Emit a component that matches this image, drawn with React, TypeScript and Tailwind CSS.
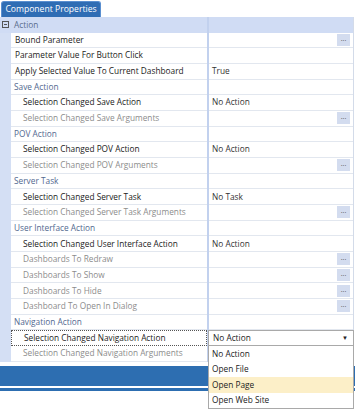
import React from "react";

type Row =
  | { kind: "cat"; label: string }
  | { kind: "prop"; label: string; indent: number; disabled?: boolean; value?: string; dots?: boolean; combo?: boolean };

const rows: Row[] = [
  { kind: "prop", label: "Bound Parameter", indent: 0, dots: true },
  { kind: "prop", label: "Parameter Value For Button Click", indent: 0 },
  { kind: "prop", label: "Apply Selected Value To Current Dashboard", indent: 0, value: "True" },
  { kind: "cat", label: "Save Action" },
  { kind: "prop", label: "Selection Changed Save Action", indent: 1, value: "No Action" },
  { kind: "prop", label: "Selection Changed Save Arguments", indent: 1, disabled: true, dots: true },
  { kind: "cat", label: "POV Action" },
  { kind: "prop", label: "Selection Changed POV Action", indent: 1, value: "No Action" },
  { kind: "prop", label: "Selection Changed POV Arguments", indent: 1, disabled: true, dots: true },
  { kind: "cat", label: "Server Task" },
  { kind: "prop", label: "Selection Changed Server Task", indent: 1, value: "No Task" },
  { kind: "prop", label: "Selection Changed Server Task Arguments", indent: 1, disabled: true, dots: true },
  { kind: "cat", label: "User Interface Action" },
  { kind: "prop", label: "Selection Changed User Interface Action", indent: 1, value: "No Action" },
  { kind: "prop", label: "Dashboards To Redraw", indent: 1, disabled: true, dots: true },
  { kind: "prop", label: "Dashboards To Show", indent: 1, disabled: true, dots: true },
  { kind: "prop", label: "Dashboards To Hide", indent: 1, disabled: true, dots: true },
  { kind: "prop", label: "Dashboard To Open In Dialog", indent: 1, disabled: true, dots: true },
  { kind: "cat", label: "Navigation Action" },
  { kind: "prop", label: "Selection Changed Navigation Action", indent: 1, combo: true },
  { kind: "prop", label: "Selection Changed Navigation Arguments", indent: 1, disabled: true },
];

const options = ["No Action", "Open File", "Open Page", "Open Web Site"];

function DotsButton() {
  return (
    <div className="ml-auto mr-[3px] flex h-[12px] w-[13px] items-center justify-center bg-[#d3dcef] text-[7px] leading-none text-[#555]">
      <span className="-mt-[3px]">...</span>
    </div>
  );
}

export default function App() {
  return (
    <div
      className="relative h-[410px] w-[355px] overflow-hidden bg-white text-[8.3px] text-[#222]"
      style={{ fontFamily: '"Open Sans", "Noto Sans", sans-serif' }}
    >
      <div className="pl-[1px] pt-[1px]">
        <div className="flex h-[16px] w-[100px] items-center justify-center rounded-t-[3px] border border-b-0 border-[#5a8fd0] bg-[#2f6db4] text-[8.6px] text-white">
          Component Properties
        </div>
      </div>

      {/* Grid */}
      <div className="flex w-[354px] flex-col border-r border-[#d3dbe9]">
        {/* Header row */}
        <div className="flex h-[15.68px] items-stretch bg-[#d0dcf4]">
          <div className="flex w-[11px] items-center justify-center">
            <div className="relative h-[7px] w-[7px] border border-[#555]">
              <div className="absolute left-[1px] top-[2px] h-[1px] w-[3px] bg-[#555]" />
            </div>
          </div>
          <div className="flex w-[196px] items-center pl-[3px] text-[#5a6d8e]">Action</div>
          <div className="w-[2px] bg-[#c2d1ee]" />
          <div className="flex-1" />
        </div>

        {rows.map((r, i) => {
          if (r.kind === "cat") {
            return (
              <div key={i} className="flex h-[15.68px] items-stretch">
                <div className="w-[11px] bg-[#d4dff4]" />
                <div className="flex w-[196px] items-center border-b border-[#e2e7ef] pl-[3px] text-[#52688f]">
                  {r.label}
                </div>
                <div className="w-[2px] bg-[#c2d1ee]" />
                <div className="flex-1 border-b border-[#e2e7ef]" />
              </div>
            );
          }
          return (
            <div key={i} className="flex h-[15.68px] items-stretch">
              <div className="w-[11px] bg-[#d4dff4]" />
              <div
                className={
                  "flex w-[196px] items-center overflow-hidden whitespace-nowrap " +
                  (r.combo
                    ? "border border-dotted border-[#555] "
                    : "border-b border-[#e2e7ef] ") +
                  (r.indent ? "pl-[12px] " : "pl-[4px] ") +
                  (r.disabled ? "text-[#8c8c8c]" : "text-[#222]")
                }
              >
                {r.label}
              </div>
              <div className="w-[2px] bg-[#c2d1ee]" />
              <div className="relative flex flex-1 items-center border-b border-[#e2e7ef] pl-[3px] text-[#333]">
                {r.value ? <span>{r.value}</span> : null}
                {r.dots ? <DotsButton /> : null}
                {r.combo ? (
                  <>
                    <div className="absolute -left-[1px] -right-[1px] top-0 z-10 flex h-[16px] items-center border border-[#a9a9a9] bg-white pl-[4px] text-[#222]">
                      <span>No Action</span>
                      <span className="ml-auto mr-[5px] text-[6px]">▼</span>
                    </div>
                    <div className="absolute -left-[1px] -right-[1px] top-[16px] z-10 flex h-[63px] flex-col border border-t-0 border-[#a9a9a9] bg-white text-[#222]">
                      {options.map((o) => (
                        <div
                          key={o}
                          className={
                            "flex h-[15.5px] items-center pl-[3px] " +
                            (o === "Open Page" ? "bg-[#fcefc8]" : "")
                          }
                        >
                          {o}
                        </div>
                      ))}
                    </div>
                  </>
                ) : null}
              </div>
            </div>
          );
        })}
      </div>

      {/* Bottom bars */}
      <div className="mt-[4px] h-[20px] w-full bg-[#2d6eb1]" />
      <div className="mt-[2px] h-[3px] w-full bg-[#2d6eb1]" />
    </div>
  );
}
